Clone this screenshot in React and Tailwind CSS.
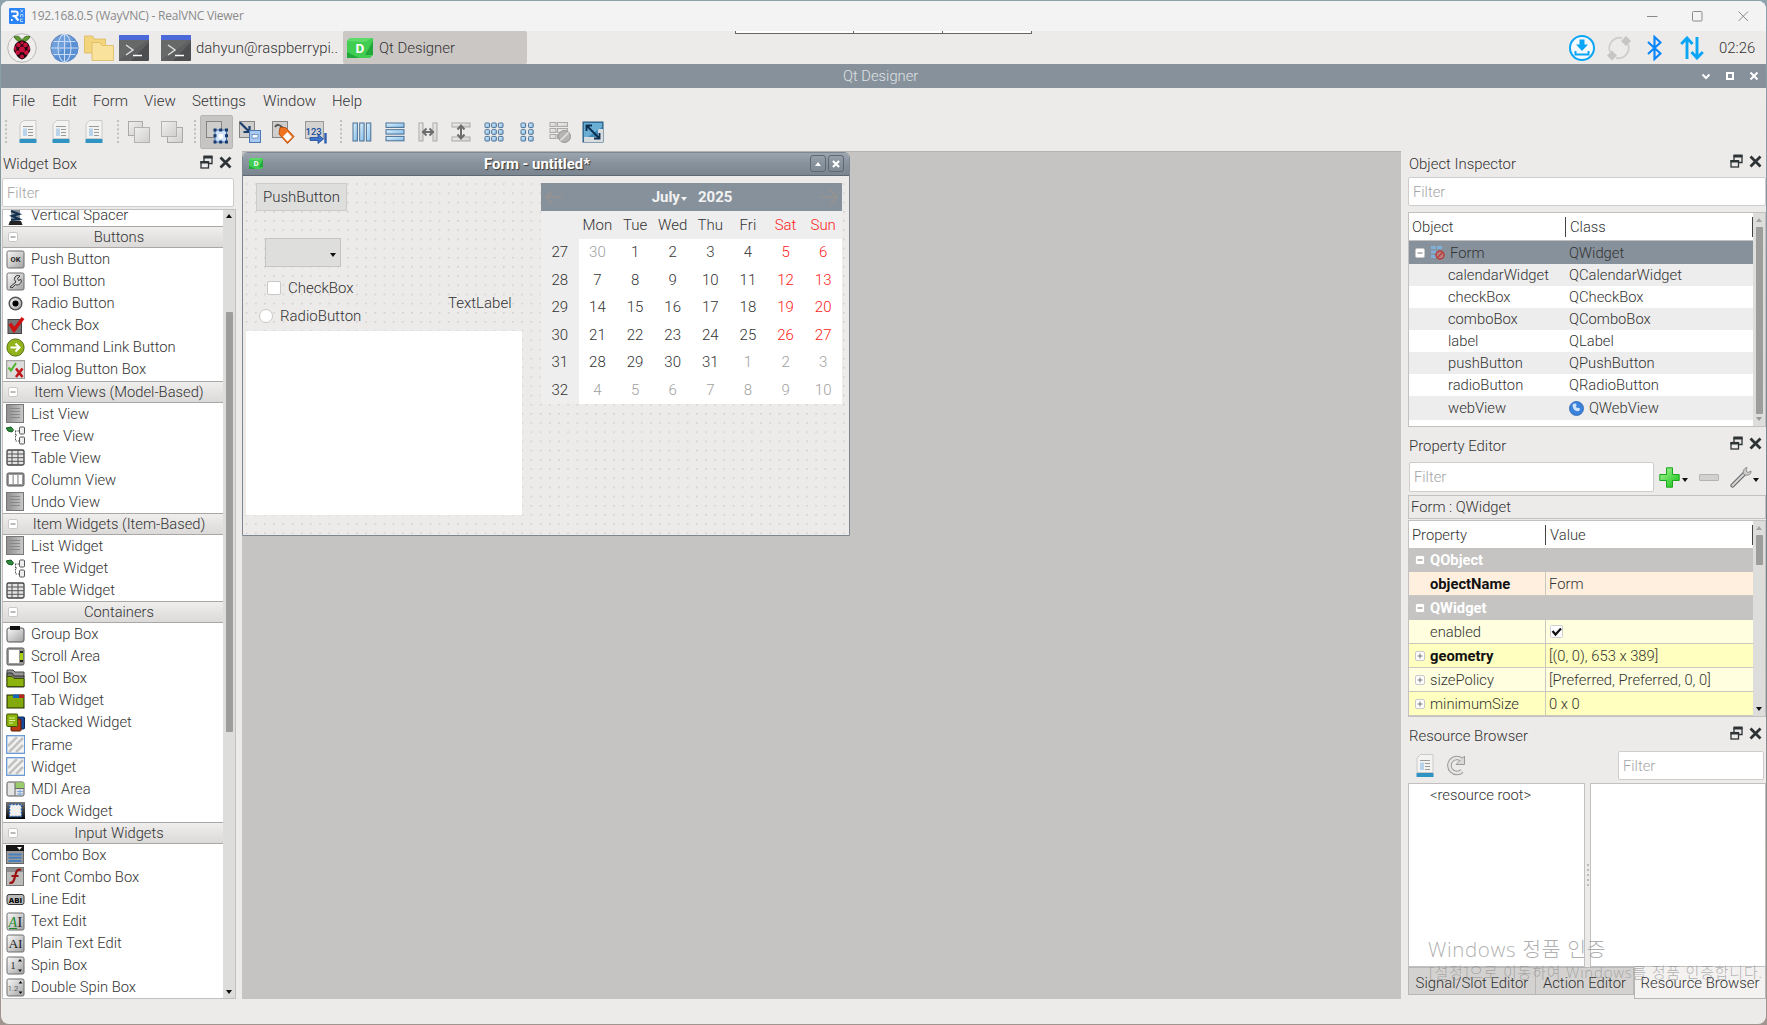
import React from "react";

const UI = "font-['Roboto'] font-light";

function Restore() {
  return (
    <svg width="13" height="15" viewBox="0 0 13 15" fill="none" stroke="#2e3436">
      <path d="M4 6V2h8v6.500H8.500" strokeWidth="1.300" />
      <path d="M3.500 2h9" strokeWidth="3" />
      <rect x="1" y="7" width="7.500" height="6" strokeWidth="1.300" />
      <path d="M.4 7.200h8.700" strokeWidth="2.600" />
    </svg>
  );
}
function Cross({ s = 13, c = "#2e3436", w = 2.8 }) {
  return (
    <svg width={s} height={s} viewBox="0 0 13 13" stroke={c} strokeWidth={w}>
      <path d="M1.500 1.500l10 10M11.500 1.500l-10 10" />
    </svg>
  );
}
function Arrow({ up, c = "#111" }) {
  return (
    <svg width="6" height="4" viewBox="0 0 6 4" fill={c}>
      <path d={up ? "M0 4l3-4 3 4z" : "M0 0h6L3 4z"} />
    </svg>
  );
}

function DockTitle({ children, pad = "pt-[2px]" }) {
  return (
    <div className={"flex h-[33px] items-center pr-[4px] " + pad}>
      <span className="flex-1 pl-px text-[14.9px]">{children}</span>
      <div className="mb-[4px] flex items-center gap-[6px]">
        <Restore />
        <Cross />
      </div>
    </div>
  );
}
function Filter({ className }) {
  return (
    <div className={"flex items-center rounded-[2px] border border-[#cfcdcb] bg-white pl-[4px] text-[#a5a5a5] " + className}>
      <span>Filter</span>
    </div>
  );
}
function Minus({ plus }) {
  return (
    <svg width="10" height="10" viewBox="0 0 10 10">
      <rect x=".5" y=".5" width="9" height="9" rx="1.500" fill="#fff" stroke="#c9c8c7" />
      <path d={plus ? "M2.500 5h5M5 2.500v5" : "M2.500 5h5"} stroke="#777" />
    </svg>
  );
}

/* ---------- top bars ---------- */
function TitleBar() {
  return (
    <div className="flex h-[30px] shrink-0 items-center bg-[#f3f3f3] pl-[8px] pr-[17px]">
      <svg width="16" height="16" viewBox="0 0 16 16">
        <rect width="16" height="16" rx="1" fill="#2a84f5" />
        <path d="M2 3.500h4.500a2.200 2.200 0 010 4.500H3.500M2 12h1.500M6 8.500l3.500 4" fill="none" stroke="#fff" strokeWidth="1.900" />
        <path d="M11.500 1.500l2.500 3M14 1.500l-2.500 3M11.500 9V6.500H14V9M14 11h-2.500v2.500H14" fill="none" stroke="#cfe4ff" strokeWidth=".8" />
      </svg>
      <span className="ml-[6px] flex-1 font-['Open_Sans'] text-[12px] font-normal leading-none tracking-[-0.22px] text-[#8a8a8a]">
        192.168.0.5 (WayVNC) - RealVNC Viewer
      </span>
      <svg width="102" height="12" viewBox="0 0 102 12" fill="none" stroke="#8a8a8a">
        <path d="M0 6.500h10.500" />
        <rect x="45.500" y="1.500" width="9.500" height="9.500" rx="1" />
        <path d="M91.500 1.500l9.500 9.500M101 1.500l-9.500 9.500" />
      </svg>
    </div>
  );
}
function Terminal() {
  return (
    <svg width="30" height="26" viewBox="0 0 30 26">
      <rect width="30" height="26" rx="1" fill="#4c4e4f" />
      <path d="M0 26V20L28 5h2v2L12 26z" fill="#5d5f60" />
      <path d="M0 5h29L0 25z" fill="#676969" />
      <rect width="30" height="5" fill="#4b69d8" />
      <path d="M7 10l7 5-7 5" fill="none" stroke="#ddd" strokeWidth="1.500" />
      <path d="M14 20.500h9" stroke="#fff" strokeWidth="1.500" />
    </svg>
  );
}
function QtIcon({ w, h }) {
  return (
    <svg width={w} height={h} viewBox="0 0 26 20">
      <path d="M3 0h23v17l-3 3H0V3z" fill="#41cd52" />
      <path d="M0 14l12 6H0zM26 3l-8 14h8z" fill="#22a83a" />
      <path d="M3 0h23l-8 4-18-1z" fill="#5cdb6a" />
      <text x="13" y="15" textAnchor="middle" fontFamily="Roboto" fontWeight="700" fontSize="13.500" fill="#fff">D</text>
    </svg>
  );
}
function TaskBar() {
  return (
    <div className="flex h-[33px] shrink-0 items-center bg-[#edebea] text-[14.9px] text-[#333]">
      <svg className="ml-[6px]" width="30" height="30" viewBox="0 0 30 30">
        <circle cx="15" cy="15" r="14.300" fill="#efeeed" stroke="#b9b8b7" />
        <path d="M15 9C12 9 8 7 7 3.500c4-1 7 .500 8 4.500 1-4 4-5.500 8-4.500C22 7 18 9 15 9z" fill="#5c9b2e" stroke="#2f5a14" strokeWidth=".7" />
        <path d="M15 7.500c3 0 7 2.500 7.500 6 1.500 2.500 1 5.500-1.500 7.500-1 3-3.500 4.500-6 5.500-2.500-1-5-2.500-6-5.500-2.500-2-3-5-1.500-7.500C8 10 12 7.500 15 7.500z" fill="#1d0710" />
        <g fill="#c8103c">
          <circle cx="15" cy="16.500" r="2.900" /><circle cx="11.500" cy="12" r="2.300" /><circle cx="18.500" cy="12" r="2.300" />
          <circle cx="15" cy="9.800" r="1.600" /><circle cx="10.700" cy="19.600" r="2.300" /><circle cx="19.300" cy="19.600" r="2.300" />
          <circle cx="15" cy="23.500" r="2" /><ellipse cx="8.300" cy="15.500" rx="1.200" ry="2.300" /><ellipse cx="21.700" cy="15.500" rx="1.200" ry="2.300" />
        </g>
      </svg>
      <svg className="ml-[13px]" width="29" height="30" viewBox="0 0 29 30">
        <circle cx="14.500" cy="15" r="13.600" fill="#6f9fdc" stroke="#5d7fb0" />
        <path d="M4 25L24 5a13.600 13.600 0 01-20 20z" fill="#5b8fd3" />
        <g fill="none" stroke="#c7dbf3" strokeWidth="1.100">
          <ellipse cx="14.500" cy="15" rx="6.500" ry="13.600" /><path d="M14.500 1.500v27M1 15h27M3.500 8.500h22M3.500 21.500h22" />
        </g>
      </svg>
      <svg className="ml-[5px]" width="30" height="26" viewBox="0 0 30 26" stroke="#dcb95e" strokeWidth=".8">
        <path d="M.5 1h8l2 3h11v14H.5z" fill="#f2d57d" />
        <path d="M8 7.500h8l2 3h11.500v15H8z" fill="#f9e29c" />
      </svg>
      <span className="ml-[5px]"><Terminal /></span>
      <span className="ml-[12px]"><Terminal /></span>
      <span className="ml-[5px] w-[147px] whitespace-nowrap">dahyun@raspberrypi..</span>
      <div className="flex h-full w-[184px] items-center rounded-[2px] bg-[#cbc7c4] pl-[4px]">
        <QtIcon w={26} h={20} />
        <span className="ml-[6px]">Qt Designer</span>
      </div>
      <div className="ml-[208px] flex h-[3px] w-[297px] self-start border-x border-b border-[#666] bg-white">
        <div className="w-[118px] border-r border-[#666]" />
        <div className="w-[89px] border-r border-[#666]" />
      </div>
      <svg className="ml-auto" width="26" height="28" viewBox="0 0 26 28" fill="none" stroke="#0ba5f5" strokeWidth="2">
        <circle cx="13" cy="14" r="12" fill="#f6f9fb" />
        <path d="M6.500 17v3.500h13V17" />
        <path d="M10.500 5.500h5v5h3.500L13 17l-6-6.500h3.500z" fill="#0ba5f5" stroke="none" />
      </svg>
      <svg className="ml-[11px]" width="26" height="26" viewBox="0 0 26 26" fill="none" stroke="#cfcecd" strokeWidth="1.800">
        <path d="M16 3A10.500 10.500 0 004 17M10 23A10.500 10.500 0 0022 9" />
        <path d="M20 1l5 5-5 5-5-5zM6 15.500l5 5-5 5-5-5z" fill="#c6c5c4" stroke="none" />
      </svg>
      <svg className="ml-[15px]" width="15" height="26" viewBox="0 0 15 26" fill="none" stroke="#0a86fb" strokeWidth="2.200">
        <path d="M1 7l12.500 11.500L7.500 24V2l6 5.500L1 19" />
      </svg>
      <svg className="ml-[18px]" width="24" height="24" viewBox="0 0 24 24" fill="none" stroke="#0ba5f5" strokeWidth="2.900">
        <path d="M7 23V2.500M1.200 8L7 2l5.500 6M17 1v20.500M11.500 16l5.500 6 5.800-6" />
      </svg>
      <span className="ml-[15px] mr-[10px] w-[37px] whitespace-nowrap">02:26</span>
    </div>
  );
}

/* ---------- toolbar ---------- */
const lb = { fill: "url(#blu)", stroke: "#4a6f93", strokeWidth: 1 };
const lg = { fill: "url(#gry)", stroke: "#aaa9a8", strokeWidth: 1 };
function Defs() {
  return (
    <svg width="0" height="0" className="absolute">
      <defs>
        <linearGradient id="blu" x1="0" y1="0" x2="1" y2="1"><stop offset="0" stopColor="#e2f4ff" /><stop offset="1" stopColor="#7fb9e6" /></linearGradient>
        <linearGradient id="gry" x1="0" y1="0" x2="1" y2="1"><stop offset="0" stopColor="#f0f0ef" /><stop offset="1" stopColor="#cfcecd" /></linearGradient>
        <linearGradient id="dkg" x1="0" y1="0" x2="1" y2="1"><stop offset="0" stopColor="#fafafa" /><stop offset="1" stopColor="#a2a2a2" /></linearGradient>
        <linearGradient id="mid" x1="0" y1="0" x2="1" y2="0"><stop offset="0" stopColor="#8d8d8d" /><stop offset="1" stopColor="#c9c9c9" /></linearGradient>
        <linearGradient id="grn" x1="0" y1="0" x2="1" y2="1"><stop offset="0" stopColor="#aaf79a" /><stop offset="1" stopColor="#10c010" /></linearGradient>
        <linearGradient id="blk" x1="0" y1="0" x2="0" y2="1"><stop offset="0" stopColor="#777" /><stop offset="1" stopColor="#050505" /></linearGradient>
      </defs>
    </svg>
  );
}
function Doc() {
  return (
    <svg width="18" height="23" viewBox="0 0 18 23">
      <path d="M4.500.5H17v18H1V4z" fill="#f3f3f2" stroke="#cbcac9" />
      <path d="M4 6.500h10M9 9.500h5M9 12.500h5M9 15.500h5" stroke="#9c9b9a" strokeWidth="1.200" />
      <rect x="4" y="8.500" width="4" height="7.500" fill="#b9d4ea" />
      <rect x=".5" y="19" width="17" height="4" fill="#2f93c4" />
    </svg>
  );
}
const handle = (
  <svg width="2" height="23" viewBox="0 0 2 23" fill="#c2c0be">
    {[0, 4.2, 8.4, 12.6, 16.8, 21].map((y) => <rect key={y} y={y} width="2" height="2" />)}
  </svg>
);
function Tool({ children }) {
  return <div className="flex h-[34px] w-[33px] items-center justify-center">{children}</div>;
}
function Ic({ children, s = 24 }) {
  return <svg width={s} height={s} viewBox="0 0 24 24">{children}</svg>;
}
const base = <rect x="1.500" y="1.500" width="15" height="16" fill="#cfcecd" stroke="#858483" />;
function ToolBar() {
  return (
    <div className="flex h-[38px] shrink-0 items-center pb-[1px] pl-[4px]">
      {handle}
      <div className="ml-[4px] flex">
        {[0, 1, 2].map((i) => <Tool key={i}><Doc /></Tool>)}
      </div>
      <span className="ml-[7px]">{handle}</span>
      <div className="ml-[3px] flex">
        <Tool><Ic><rect x="1.500" y="1.500" width="14" height="14" {...lg} /><rect x="7.500" y="7.500" width="15" height="15" {...lg} stroke="#b3b2b1" /></Ic></Tool>
        <Tool><Ic><rect x="7.500" y="7.500" width="15" height="15" {...lg} /><rect x="1.500" y="1.500" width="15" height="15" {...lg} stroke="#b3b2b1" /></Ic></Tool>
      </div>
      <span className="ml-[6px]">{handle}</span>
      <div className="ml-[4px] flex">
        <div className="rounded-[2px] border border-[#b8b6b4] bg-[#c6c5c4]"><div className="flex h-[32px] w-[31px] items-center justify-center">
          <Ic>
            {base}
            <rect x="10" y="10" width="11.500" height="12" fill="#cfe2fb" stroke="#3f6fb0" />
            <rect x="13.500" y="14" width="4.500" height="4.500" fill="#fff" />
            <g fill="#163a6c">{[8.5, 14.2, 20].map((x) => [8.5, 14.2, 20.5].map((y) => (x === 14.2 && y === 14.2 ? null : <rect key={x + "-" + y} x={x} y={y} width="3" height="3" />)))}</g>
          </Ic>
        </div></div>
        <Tool><Ic>{base}<path d="M2 2.500l9 9M11.500 6v6H5.500" stroke="#1d3f6e" strokeWidth="2.200" fill="none" /><rect x="11.500" y="10.500" width="11" height="12" fill="#a9c8ef" stroke="#4b78b3" /><rect x="14" y="14.500" width="6" height="3.500" fill="#fff" stroke="#6d95c8" /></Ic></Tool>
        <Tool><Ic>{base}<path d="M4 7c2-3 4-3 8 1" stroke="#555" strokeWidth="2" fill="none" /><path d="M9 7.500h5.500l8.500 9-6.500 7L8 14z" fill="#ee7422" stroke="#b9500d" /><path d="M16.500 12l4.500 5-4.500 4.500-4.500-5z" fill="#fff" /></Ic></Tool>
        <Tool><Ic><rect x="1.500" y="1.500" width="18" height="17" fill="#d3d2d1" stroke="#999" /><text x="1.500" y="14.500" fontFamily="Roboto" fontSize="9.500" fontWeight="500" fill="#1b4c9c">123</text><path d="M6 17.500h8v-3l5.500 4.500-5.500 4.500v-3H6z" fill="#3f74c8" stroke="#1b4c9c" strokeWidth=".8" /><path d="M21.500 13v10.500" stroke="#2c5db0" strokeWidth="2.400" /></Ic></Tool>
      </div>
      <span className="ml-[8px]">{handle}</span>
      <div className="ml-[3px] flex">
        <Tool><Ic>{[3, 9.7, 16.4].map((x) => <rect key={x} x={x} y="3" width="4.400" height="18" {...lb} />)}</Ic></Tool>
        <Tool><Ic>{[3, 9.7, 16.4].map((y) => <rect key={y} y={y} x="3" height="4.400" width="18" {...lb} />)}</Ic></Tool>
        <Tool><Ic><rect x="3" y="3" width="4" height="18" {...lg} /><rect x="17" y="3" width="4" height="18" {...lg} /><path d="M6 12h12M10.500 8.500L7 12l3.500 3.500M13.500 8.500L17 12l-3.500 3.500" stroke="#6d6d6d" strokeWidth="2" fill="none" /></Ic></Tool>
        <Tool><Ic><rect x="3" y="3" height="4" width="18" {...lg} /><rect x="3" y="17" height="4" width="18" {...lg} /><path d="M12 5v14M8.500 9.500L12 5.500l3.500 4M8.500 14.500l3.500 4 3.500-4" stroke="#6d6d6d" strokeWidth="2" fill="none" /></Ic></Tool>
        <Tool><Ic>{[3, 9.7, 16.4].map((x) => [3, 9.7, 16.4].map((y) => <rect key={x + "-" + y} x={x} y={y} width="4.600" height="4.600" rx=".8" {...lb} />))}</Ic></Tool>
        <Tool><Ic>{[6, 13.6].map((x) => [3, 9.7, 16.4].map((y) => <rect key={x + "-" + y} x={x} y={y} width="4.600" height="4.600" rx=".8" {...lb} />))}</Ic></Tool>
        <Tool><Ic>{[2, 9.5].map((x) => [2.5, 8.5, 14.5].map((y) => <rect key={x + "-" + y} x={x} y={y} width={x === 2 ? 6 : 10} height="4" {...lg} />))}<circle cx="16.500" cy="16.500" r="6" fill="#b5b4b3" stroke="#959493" /><path d="M12.500 20.500l8-8" stroke="#dcdbda" strokeWidth="1.800" /></Ic></Tool>
        <Tool><Ic><rect x="2" y="2" width="20" height="20" fill="#3e87b5" stroke="#27567b" /><path d="M3 17h14V9h5v13H3z" fill="#d9dcde" /><path d="M3 3h18v4L7 17H3z" fill="#6aaed4" /><path d="M6 6l12 12M5.500 11V5.500H11M13 18.500h5.500V13" stroke="#0c2f4f" strokeWidth="1.900" fill="none" /></Ic></Tool>
      </div>
    </div>
  );
}

/* ---------- widget box ---------- */
const sq = <rect x="1" y="1" width="17" height="17" rx="1.500" fill="url(#dkg)" stroke="#6d6d6d" />;
const list = (<><rect x=".5" y=".5" width="17" height="18" fill="url(#mid)" stroke="#777" /><path d="M4 4.500h10M4 7.500h10M4 10.500h10M4 13.500h10" stroke="#808080" strokeWidth=".8" /></>);
const tree = (<><path d="M0 2l5-1 2.500 3L6 6 2 5z" fill="#2c8a3a" stroke="#155a20" strokeWidth="1" /><path d="M9 5h4M9.500 5v10h4M9.500 9h2" stroke="#555" strokeDasharray="1.500 1" fill="none" /><rect x="13.500" y="1" width="5" height="7" rx="1" fill="#eee" stroke="#555" /><rect x="13.500" y="11" width="5" height="7" rx="1" fill="#eee" stroke="#555" /></>);
const table = (<><rect x="1" y="2" width="17" height="15" rx="1.500" fill="#e3e3e3" stroke="#444" strokeWidth="1.300" /><path d="M1 6h17M6 2v15M1 9.700h17M1 13.300h17M12 2v15" stroke="#555" /></>);
const hatch = (<><rect x=".7" y=".7" width="18" height="17.600" fill="#f3f3f2" stroke="#5b8fd0" strokeWidth="1.200" /><path d="M2 11L11 2M3 17L17 3M10 17l7-7" stroke="#c2c2c1" strokeWidth="2.600" /></>);
const tx = (s, f, size, x = 9.5, y = 14, extra = {}) => <text x={x} y={y} textAnchor="middle" fontFamily={f} fontSize={size} fill="#222" {...extra}>{s}</text>;
const glyphs = {
  vspace: <><path d="M4 0h11v3H4z" fill="#222" /><rect x="5" y="3" width="9" height="12" fill="#8a9199" /><path d="M5 5l8 3-7 2 7 3-8 1" stroke="#12304f" strokeWidth="2" fill="none" /><path d="M4 15h11l1.500 4H2.500z" fill="#222" /></>,
  push: <>{sq}{tx("OK", "Roboto", 7.5, 9.5, 12, { fontWeight: 700 })}</>,
  tool: <>{sq}<path d="M4 15l6-5a4 4 0 01-1-5c1-1.500 3-2 5-1l-2.500 2.500 1 2L15 7.500c1 2-.500 5-3.500 5.500-1 0-1.500-.200-2-.500L6 16z" fill="#d7d7d7" stroke="#333" /></>,
  radio: <><circle cx="9.500" cy="9.500" r="6.300" fill="url(#dkg)" stroke="#555" strokeWidth="1.500" /><circle cx="9.500" cy="9.500" r="3" fill="#000" /></>,
  check: <><rect x="2" y="3.500" width="13.500" height="14" fill="#777" stroke="#444" /><path d="M4 7.500l4 6.500L17 2" stroke="#cf1111" strokeWidth="3.600" fill="none" /></>,
  cmd: <><circle cx="9.500" cy="9.500" r="8.600" fill="#92b31c" stroke="#56700d" /><path d="M4.500 9.500h8.500M9.500 5.500l4 4-4 4" stroke="#fff" strokeWidth="2" fill="none" /></>,
  dlg: <><rect x=".7" y=".7" width="18" height="18" fill="#dcdcdb" stroke="#8d8d8c" /><path d="M2.500 7.500l2.500 3L10 3" stroke="#4fb62d" strokeWidth="2" fill="none" /><path d="M10 8.500l6.500 8.500M16.500 8.500L10 17" stroke="#c01818" strokeWidth="2.600" /></>,
  list, tree, table,
  column: <><rect x="1" y="3" width="17" height="13" rx="1.500" fill="#999" stroke="#555" /><path d="M3 5h3.500v9H3zM7.800 5h3.500v9H7.800zM12.600 5H16v9h-3.400z" fill="#fff" /></>,
  group: <><rect x="1" y="3" width="17" height="14" rx="2" fill="url(#dkg)" stroke="#555" /><path d="M4 1h10v4H4z" fill="#111" /></>,
  scroll: <><rect x="1" y="1" width="17" height="17" rx="1.500" fill="#9b9b9b" stroke="#555" /><rect x="3" y="3" width="10" height="13" fill="#fff" /><path d="M14 4h3v11h-3z" fill="#222" /><path d="M14 6h3v7h-3z" fill="#a6d10d" /></>,
  toolbox: <><path d="M1 1h6l2 2h9v5H1z" fill="#999" stroke="#444" /><path d="M1 4h5l2 3h10v11H1z" fill="#777" stroke="#333" /><path d="M1 7.500h5l2 2h10v8H1z" fill="#8db30f" stroke="#3c4f00" /></>,
  tab: <><rect x="1" y="4" width="17" height="13" fill="#84a90c" stroke="#1d2800" /><path d="M7 3.500h6V7H7z" fill="#1664b8" /><path d="M13 3.500h5V7h-5z" fill="#b3261c" /></>,
  stacked: <><rect x="9" y="4" width="9.500" height="12" rx="1" fill="#174a9c" stroke="#0d2450" /><rect x="5" y="6" width="10" height="12" rx="1" fill="#b83a12" stroke="#5c1a05" /><rect x=".7" y="1" width="11" height="12.500" rx="1" fill="#8db30f" stroke="#3c4f00" /><path d="M3 5h6M3 7.500h6M3 10h4" stroke="#dff09c" /></>,
  hatch,
  mdi: <><rect x="1" y="3" width="17" height="14" rx="1.500" fill="#e4e4e3" stroke="#555" /><path d="M9 3.500h9V9H9z" fill="#9acb6a" /><path d="M9 3.500v13M9 9.500h9" stroke="#666" /><path d="M11 12.500h6M11 15h6M14 10.500v6" stroke="#7aa7df" /></>,
  dock: <><rect x="0" y="1" width="19" height="17" fill="url(#blk)" /><rect x="3.500" y="3.500" width="12" height="12" fill="#f0f0ef" stroke="#1f5fae" strokeWidth="1.500" strokeDasharray="1.800 1.400" /></>,
  combo: <><rect x=".5" y=".5" width="17" height="18" fill="#9a9a9a" stroke="#666" /><path d="M0 0h18v6H0z" fill="#151515" /><path d="M11 2h5l-2.500 3z" fill="#fff" /><path d="M2.500 9.500h13M2.500 12.800h13M2.500 16h13" stroke="#4780bd" strokeWidth="2" /></>,
  font: <><rect x=".5" y=".5" width="17" height="18" fill="#bdbdbc" stroke="#777" /><path d="M1 1h16v4H1z" fill="#8e8e8e" /><path d="M15 3c-4-1.500-5 2-6 6.500S6.500 17 3.500 15.500M5.500 9h7" stroke="#9c1010" strokeWidth="2.200" fill="none" /></>,
  line: <><rect x="1" y="5.500" width="17" height="10" rx="2" fill="#bbb" stroke="#333" /><text x="9.500" y="13.500" textAnchor="middle" fontFamily="DejaVu Sans" fontWeight="700" fontSize="7" fill="#000">ABI</text></>,
  text: <>{sq}<text x="2.500" y="15" fontFamily="Liberation Serif" fontStyle="italic" fontSize="14" fill="#1d8a2e">A</text><text x="11.500" y="15" fontFamily="Liberation Serif" fontSize="14" fill="#222">I</text><path d="M3 16.500h8" stroke="#1d8a2e" /></>,
  plain: <>{sq}{tx("AI", "Liberation Serif", 13.5)}</>,
  spin: <>{sq}{tx("1", "Liberation Serif", 10, 7, 13)}<path d="M12 5.500l2-2.500 2 2.500zM12 13.500l2 2.500 2-2.500z" fill="#111" /></>,
  dspin: <>{sq}{tx("1.2", "Roboto", 8, 7, 12.500)}<path d="M12.500 5.500l2-2.500 2 2.500zM12.500 13.500l2 2.500 2-2.500z" fill="#111" /></>,
};
const rows = [
  ["Buttons"], ["Push Button", "push"], ["Tool Button", "tool"], ["Radio Button", "radio"], ["Check Box", "check"], ["Command Link Button", "cmd"], ["Dialog Button Box", "dlg"],
  ["Item Views (Model-Based)"], ["List View", "list"], ["Tree View", "tree"], ["Table View", "table"], ["Column View", "column"], ["Undo View", "list"],
  ["Item Widgets (Item-Based)"], ["List Widget", "list"], ["Tree Widget", "tree"], ["Table Widget", "table"],
  ["Containers"], ["Group Box", "group"], ["Scroll Area", "scroll"], ["Tool Box", "toolbox"], ["Tab Widget", "tab"], ["Stacked Widget", "stacked"], ["Frame", "hatch"], ["Widget", "hatch"], ["MDI Area", "mdi"], ["Dock Widget", "dock"],
  ["Input Widgets"], ["Combo Box", "combo"], ["Font Combo Box", "font"], ["Line Edit", "line"], ["Text Edit", "text"], ["Plain Text Edit", "plain"], ["Spin Box", "spin"], ["Double Spin Box", "dspin"],
];
function Item({ label, icon }) {
  return (
    <div className="flex h-[22.07px] shrink-0 items-center pl-[3px]">
      <svg className="shrink-0" width="19" height="19" viewBox="0 0 19 19">{glyphs[icon]}</svg>
      <span className="ml-[6px] whitespace-nowrap">{label}</span>
    </div>
  );
}
function WidgetBox() {
  return (
    <div className="flex w-[235px] shrink-0 flex-col pl-px">
      <div className="-mt-[6px] pl-0"><DockTitle pad="pt-[5px]">Widget Box</DockTitle></div>
      <Filter className="h-[29px] w-[232px]" />
      <div className="mt-[2px] flex h-[790px] border border-[#c3c1bf] bg-white">
        <div className="flex min-w-0 flex-1 flex-col overflow-hidden">
          <div className="-mt-[6px]"><Item label="Vertical Spacer" icon="vspace" /></div>
          {rows.map(([label, icon], i) =>
            icon ? <Item key={i} label={label} icon={icon} /> : (
              <div key={i} className="flex h-[22.07px] shrink-0 items-center border-y border-[#a9a8a7] bg-linear-to-b from-[#efeeed] to-[#dbdad8] pl-[5px]">
                <Minus />
                <span className="flex-1 pr-[3px] text-center">{label}</span>
              </div>
            ))}
        </div>
        <div className="flex w-[12px] flex-col items-center bg-[#dddddc] py-[4px]">
          <Arrow up />
          <div className="mt-[94px] h-[420px] w-[7px] rounded-[1px] bg-[#9d9d9c]" />
          <div className="mt-auto"><Arrow /></div>
        </div>
      </div>
    </div>
  );
}

/* ---------- form ---------- */
const weeks = [
  [27, 30, 1, 2, 3, 4, 5, 6], [28, 7, 8, 9, 10, 11, 12, 13], [29, 14, 15, 16, 17, 18, 19, 20],
  [30, 21, 22, 23, 24, 25, 26, 27], [31, 28, 29, 30, 31, 1, 2, 3], [32, 4, 5, 6, 7, 8, 9, 10],
];
function dayColor(w, d) {
  const v = weeks[w][d];
  if ((w === 0 && v > 20) || (w >= 4 && v < 20)) return "text-[#a0a0a0]";
  return d >= 6 ? "text-[#ff1a1a]" : "text-[#333]";
}
function Calendar() {
  return (
    <div className="w-[301px] bg-[#eeeeee]">
      <div className="flex h-[28px] items-center bg-[#87919b] px-[4px]">
        <svg width="19" height="16" viewBox="0 0 19 16" fill="none" stroke="#9b938c" strokeWidth="1.200"><path d="M18 8H1M8 1L1 8l7 7" /></svg>
        <div className="flex flex-1 items-center justify-center pl-px font-bold text-[#f2f2f2]">
          <span>July</span><span className="ml-px mt-[3px]"><Arrow c="#f2f2f2" /></span><span className="ml-[11px]">2025</span>
        </div>
        <svg width="19" height="16" viewBox="0 0 19 16" fill="none" stroke="#9b938c" strokeWidth="1.200"><path d="M1 8h17M11 1l7 7-7 7" /></svg>
      </div>
      <div className="grid h-[28px] grid-cols-8 items-center text-center">
        <span />
        {["Mon", "Tue", "Wed", "Thu", "Fri", "Sat", "Sun"].map((d, i) => (
          <span key={d} className={i > 4 ? "text-[#ff1a1a]" : "text-[#333]"}>{d}</span>
        ))}
      </div>
      {weeks.map((w, i) => (
        <div key={i} className="grid h-[27.5px] grid-cols-8 text-center leading-[27.5px]">
          {w.map((v, j) => <span key={j} className={(j ? "bg-white " + dayColor(i, j) : "text-[#333]")}>{v}</span>)}
        </div>
      ))}
    </div>
  );
}
function FormWindow() {
  return (
    <div className="flex h-[384px] w-[608px] flex-col rounded-t-[6px] border border-[#7d8791] bg-[#edebea] text-[15px]">
      <div className="flex h-[23px] items-center rounded-t-[5px] border-b border-[#5f6973] bg-linear-to-b from-[#9aa5af] via-[#87919b] to-[#7b858f] pb-px pl-[6px] pr-[5px]">
        <QtIcon w={14} h={11} />
        <span className="flex-1 pl-px text-center text-[14.9px] font-bold text-white [text-shadow:1px_1px_1px_#333]">Form - untitled*</span>
        <div className="flex gap-[2px]">
          <div className="flex h-[17px] w-[16px] items-center justify-center rounded-[3px] border border-[#5f6973]"><Arrow up c="#fff" /></div>
          <div className="flex h-[17px] w-[16px] items-center justify-center rounded-[3px] border border-[#5f6973]"><Cross s={8} c="#fff" w={3.4} /></div>
        </div>
      </div>
      <div className="flex flex-1 bg-[radial-gradient(circle_at_3.500px_8px,#d3d1cf_0.7px,transparent_1.1px)] bg-[size:9.19px_9.19px] pl-[3px] pt-[7px]">
        <div className="flex w-[276px] flex-col">
          <div className="ml-[10px] flex h-[28px] w-[91px] items-center justify-center border border-[#cdcccb] bg-[#dededd]">PushButton</div>
          <div className="ml-[19px] mt-[27px] flex h-[29px] w-[76px] items-center justify-end border border-[#c5c4c3] bg-[#dededd] pr-[4px] pt-[4px]"><Arrow /></div>
          <div className="flex">
            <div className="w-[202px]">
              <div className="ml-[21px] mt-[10px] flex h-[22px] items-center">
                <div className="h-[14px] w-[14px] rounded-[2px] border border-[#c9c8c7] bg-white" />
                <span className="ml-[7px]">CheckBox</span>
              </div>
              <div className="ml-[13px] mt-[6px] flex h-[22px] items-center">
                <div className="h-[14px] w-[14px] rounded-full border border-[#c9c8c7] bg-white" />
                <span className="ml-[7px]">RadioButton</span>
              </div>
            </div>
            <span className="mt-[27px]">TextLabel</span>
          </div>
          <div className="mt-[4px] h-[184px] bg-white" />
        </div>
        <div className="ml-[19px]"><Calendar /></div>
      </div>
    </div>
  );
}

/* ---------- right docks ---------- */
function Scroll({ thumb, dark }) {
  return (
    <div className="flex w-[12px] shrink-0 flex-col items-center bg-[#dddddc] py-[5px]">
      <Arrow up c="#a5a5a4" />
      <div className={"w-[7px] rounded-[1px] bg-[#9d9d9c] " + thumb} />
      <div className="mt-auto"><Arrow c={dark ? "#111" : "#9a9a99"} /></div>
    </div>
  );
}
function Head({ a, b, wa }) {
  return (
    <div className="flex h-[27px] shrink-0 items-center">
      <span className={"pl-[3px] " + wa}>{a}</span>
      <span className="flex h-[20px] flex-1 items-center border-x border-[#444] pl-[4px]">{b}</span>
    </div>
  );
}
const objects = [
  ["calendarWidget", "QCalendarWidget"], ["checkBox", "QCheckBox"], ["comboBox", "QComboBox"], ["label", "QLabel"],
  ["pushButton", "QPushButton"], ["radioButton", "QRadioButton"], ["webView", "QWebView"],
];
function ObjectTree() {
  return (
    <div className="mt-[6px] flex h-[215px] border border-[#c3c1bf] bg-white">
      <div className="min-w-0 flex-1">
        <Head a="Object" b="Class" wa="w-[156px]" />
        <div className="flex h-[24px] items-center border-t border-[#c3c1bf] bg-[#87919b] pl-[6px]">
          <Minus />
          <svg className="ml-[5px]" width="15" height="15" viewBox="0 0 15 15">
            <path d="M1 1h5v3H1zM7 1h5v3H7zM1 5.500h5v3H1zM7 5.500h5v3H7zM1 10h5v3H1z" fill="#7fb0d8" />
            <circle cx="10" cy="10" r="4" fill="#b9807f" stroke="#b83a3a" strokeWidth="1.400" /><path d="M7.500 12.500l5-5" stroke="#b83a3a" strokeWidth="1.300" />
          </svg>
          <span className="ml-[5px] w-[119px]">Form</span><span>QWidget</span>
        </div>
        {objects.map(([a, b], i) => (
          <div key={a} className={"flex items-center pl-[39px] " + (i % 2 ? "bg-white " : "bg-[#ededed] ") + (i === 6 ? "h-[24px]" : "h-[22px]")}>
            <span className="w-[121px]">{a}</span>
            {i === 6 && (
              <svg className="mr-[5px]" width="15" height="15" viewBox="0 0 15 15"><circle cx="7.500" cy="7.500" r="7" fill="#3b82dc" stroke="#2a62b4" strokeWidth=".8" /><path d="M3.500 3.500c2-1.500 4-1 4 .5S6 6 7.500 6.500s3.500 0 3.500 1.500-1 2.500-3.500 2-4-3-4-6.500z" fill="#cfe3fa" /></svg>
            )}
            <span>{b}</span>
          </div>
        ))}
      </div>
      <Scroll thumb="mt-[5px] h-[187px]" />
    </div>
  );
}
const props = [
  ["objectName", "Form", "bg-[#ffefdf]", "b"],
  null,
  ["enabled", "check", "bg-[#ffffdf]", ""],
  ["geometry", "[(0, 0), 653 x 389]", "bg-[#ffffbf]", "b+"],
  ["sizePolicy", "[Preferred, Preferred, 0, 0]", "bg-[#ffffdf]", "+"],
  ["minimumSize", "0 x 0", "bg-[#ffffbf]", "+"],
];
function Group({ children }) {
  return <div className="flex h-[24px] items-center gap-[5px] bg-[#c5c4c3] pl-[6px] font-bold text-white"><Minus />{children}</div>;
}
function PropertyTable() {
  return (
    <div className="mt-px flex h-[197px] border border-[#c3c1bf] bg-white">
      <div className="min-w-0 flex-1">
        <Head a="Property" b="Value" wa="w-[136px]" />
        <Group>QObject</Group>
        {props.map((p, i) => p ? (
          <div key={i} className={"flex h-[24px] items-stretch border-b border-[#c9c9c0] " + p[2]}>
            <div className="flex w-[137px] items-center border-r border-[#c9c9c0] pl-[6px]">
              <div className="w-[15px]">{p[3].includes("+") && <Minus plus />}</div>
              <span className={p[3].includes("b") ? "font-bold text-[#111]" : ""}>{p[0]}</span>
            </div>
            <div className="flex items-center pl-[3px]">
              {p[1] === "check" ? (
                <svg width="14" height="13" viewBox="0 0 14 13"><rect x="1.500" y=".5" width="12" height="12" rx="1" fill="#fff" stroke="#cfcfcf" /><path d="M3.500 6l3 3.500L12 3.500" fill="none" stroke="#111" strokeWidth="2.200" /></svg>
              ) : <span className="whitespace-nowrap">{p[1]}</span>}
            </div>
          </div>
        ) : <Group key={i}>QWidget</Group>)}
      </div>
      <Scroll thumb="mt-[5px] h-[30px]" dark />
    </div>
  );
}
function RightDock() {
  return (
    <div className="ml-[7px] flex min-w-0 flex-1 flex-col">
      <div className="-mt-[7px]"><DockTitle pad="pt-[6px]">Object Inspector</DockTitle></div>
      <Filter className="h-[29px]" />
      <ObjectTree />
      <div className="mt-[1px]"><DockTitle>Property Editor</DockTitle></div>
      <div className="mt-[1px] flex items-center pl-px">
        <Filter className="h-[30px] w-[245px]" />
        <svg className="ml-[5px]" width="21" height="21" viewBox="0 0 21 21"><path d="M7.500.8h6v6.700h6.700v6h-6.700v6.700h-6v-6.700H.8v-6h6.700z" fill="url(#grn)" stroke="#1ba51b" /></svg>
        <span className="ml-[2px] mt-[5px]"><Arrow /></span>
        <div className="ml-[11px] h-[7px] w-[20px] rounded-[1px] border border-[#b5b4b3] bg-[#d2d1d0]" />
        <svg className="ml-[11px]" width="22" height="22" viewBox="0 0 22 22"><path d="M2.500 19.500L14 8" stroke="#666" strokeWidth="4.200" strokeLinecap="round" /><path d="M2.500 19.500L14 8" stroke="#d5d5d5" strokeWidth="2.200" strokeLinecap="round" /><path d="M14 8.500c-2-3 0-6.500 3-7l-1 3.500 2 1.500 3-1.500c.5 3-3 5.500-7 3.500z" fill="#ccc" stroke="#888" strokeWidth=".9" /></svg>
        <span className="ml-px mt-[5px]"><Arrow /></span>
      </div>
      <div className="mt-[3px] flex h-[24px] items-center border border-[#c3c1bf] pl-[2px]">Form : QWidget</div>
      <PropertyTable />
      <div className="mt-[1px]"><DockTitle>Resource Browser</DockTitle></div>
      <div className="flex h-[29px] items-center pl-[8px] pr-[2px]">
        <Doc />
        <svg className="ml-[12px]" width="20" height="21" viewBox="0 0 20 21" fill="none">
          <path d="M15.500 4.500A7.500 7.500 0 1016 16" stroke="#9b9a99" strokeWidth="4.600" /><path d="M18.500 1v8.500H10z" fill="#dad9d8" stroke="#9b9a99" /><path d="M15.500 4.500A7.500 7.500 0 1016 16" stroke="#e6e5e4" strokeWidth="2.600" />
        </svg>
        <Filter className="ml-auto h-[29px] w-[146px]" />
      </div>
      <div className="mt-[3px] flex h-[184px]">
        <div className="w-[177px] border border-[#c3c1bf] bg-white pl-[21px] pt-[2px]">&lt;resource root&gt;</div>
        <div className="flex w-[5px] flex-col items-center justify-center gap-[3px]">
          {[0, 1, 2, 3, 4].map((i) => <div key={i} className="h-[2px] w-[2px] bg-[#bdbbb9]" />)}
        </div>
        <div className="flex-1 border border-[#c3c1bf] bg-white" />
      </div>
      <div className="flex items-start whitespace-nowrap text-[14.9px]">
        <div className="flex h-[28px] w-[128px] items-center justify-center border border-[#b9b7b5] bg-[#d3d2d0] pt-[3px]">Signal/Slot Editor</div>
        <div className="flex h-[28px] w-[98px] items-center justify-center border-y border-r border-[#b9b7b5] bg-[#d3d2d0] pt-[3px]">Action Editor</div>
        <div className="flex h-[32px] flex-1 items-center justify-center border-x border-b border-[#b9b7b5] bg-[#f3f2f1]">Resource Browser</div>
      </div>
    </div>
  );
}

export default function App() {
  return (
    <div className="relative h-[1025px] w-[1767px] overflow-hidden bg-linear-to-b from-[#8fa3ad] via-[#6f8488] to-[#a1968f] px-px pb-px pt-px">
      <Defs />
      <div className={"flex h-full flex-col overflow-hidden rounded-[8px] bg-[#edebea] text-[14.75px] leading-[18px] text-[#333] " + UI}>
        <TitleBar />
        <TaskBar />
        <div className="flex h-[24px] shrink-0 items-center bg-[#87919b] pr-[7px] text-[#dfe2e5]">
          <span className="ml-[842px] flex-1">Qt Designer</span>
          <svg width="58" height="10" viewBox="0 0 58 10" fill="none" stroke="#fff" strokeWidth="2">
            <path d="M1.500 3.500L5 7l3.500-3.500" /><rect x="26" y="2" width="6" height="6" /><path d="M49.500 1.500l7 7M56.500 1.500l-7 7" />
          </svg>
        </div>
        <div className="flex h-[25px] shrink-0 items-center pl-[11px] pt-px text-[15px]">
          {[["File", "w-[40px]"], ["Edit", "w-[41px]"], ["Form", "w-[51px]"], ["View", "w-[48px]"], ["Settings", "w-[71px]"], ["Window", "w-[69px]"], ["Help", "w-[40px]"]].map(([m, w]) => (
            <span key={m} className={w}>{m}</span>
          ))}
        </div>
        <ToolBar />
        <div className="flex min-h-0 flex-1">
          <WidgetBox />
          <div className="ml-[6px] h-[848px] w-[1159px] shrink-0 border-t border-[#b5b3b1] bg-[#c5c4c2]">
            <FormWindow />
          </div>
          <RightDock />
        </div>
      </div>
      <div className="pointer-events-none absolute left-[1428px] top-[934px] whitespace-nowrap font-['Open_Sans','Noto_Sans_CJK_KR',sans-serif] text-[20.500px] font-light leading-[30px] tracking-[0.65px] text-[#8c8c8c]/70">
        Windows 정품 인증
      </div>
      <div className="pointer-events-none absolute left-[1429px] top-[960px] whitespace-nowrap font-['Open_Sans','Noto_Sans_CJK_KR',sans-serif] text-[15px] font-light leading-[24px] tracking-[0.77px] text-[#8c8c8c]/65">
        [설정]으로 이동하여 Windows를 정품 인증합니다.
      </div>
    </div>
  );
}
